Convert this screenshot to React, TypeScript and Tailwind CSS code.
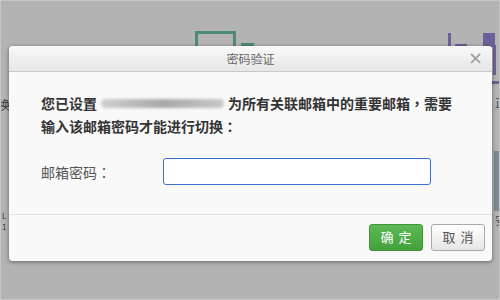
import React from "react";

const P = ({ c }: { c: string }) => (
  <span style={{ fontFamily: '"Noto Sans CJK TC", "Noto Sans CJK SC", sans-serif' }}>{c}</span>
);

export default function App() {
  const font = { fontFamily: '"Noto Sans CJK SC", "Noto Sans", sans-serif' };
  return (
    <div
      className="relative w-[500px] h-[300px] overflow-hidden bg-[#b3b3b3] border border-[#c6c6c6]"
      style={font}
    >
      {/* background canvas (dimmed by overlay) */}
      <div className="absolute left-[194px] top-[30px] w-[41px] h-[16px] border-[3px] border-b-0 border-[#4d8a79]" />
      <div className="absolute left-[240px] top-[42px] w-[13px] h-[4px] bg-[#4d8a79]" />
      <div className="absolute left-[447px] top-[32px] w-[3px] h-[14px] bg-[#6f5f98]" />
      <div className="absolute left-[454px] top-[43px] w-[12px] h-[3px] bg-[#6f5f98]" />
      <div className="absolute left-[482px] top-[32px] w-[12px] h-[14px] bg-[#6f5f98]" />
      <div className="absolute left-[492px] top-[44px] w-[3px] h-[30px] bg-[#6f5f98]" />
      <div className="absolute left-[491px] top-[80px] w-[9px] h-[3px] bg-[#6f5f98]" />
      <div className="absolute left-[493px] top-[150px] w-[7px] h-[60px] bg-[#7a8a92]" />
      <div className="absolute left-[-3px] top-[96px] text-[12px] leading-[16px] text-[#333]">换</div>
      <div className="absolute left-[494px] top-[94px] text-[11px] leading-[14px] text-[#444]">正</div>
      <div className="absolute left-[494px] top-[212px] text-[11px] leading-[14px] text-[#444]">安</div>
      <div className="absolute left-[1px] top-[209px] text-[8px] leading-[11px] text-[#333]">L<br />1</div>

      {/* dialog */}
      <div className="absolute left-[8px] top-[45px] w-[483px] h-[215px] rounded-[4px] bg-[#f9f9f9] shadow-[0_1px_4px_rgba(0,0,0,0.45)] flex flex-col overflow-hidden">
        <div className="relative h-[26px] flex items-center justify-center bg-gradient-to-b from-[#f9f9f9] to-[#e6e6e6] border-b border-[#c9c9c9]">
          <span className="text-[12px] leading-[16px] text-[#666]">密码验证</span>
          <span className="absolute right-[9px] top-[3px] text-[18px] leading-[18px] text-[#999]" style={{ fontFamily: '"DejaVu Sans", sans-serif' }}>×</span>
        </div>
        <div className="flex-1 pl-[32px] pr-[20px] pt-[20px]">
          <div className="text-[14px] leading-[23px] font-bold text-[#333]">
            <div className="flex items-center">
              <span>您已设置</span>
              <span className="inline-block w-[123px] h-[9px] mx-[4px] rounded-full bg-gradient-to-r from-[#cfcfcf] via-[#a8a8a8] to-[#c8c8c8] blur-[1.5px]" />
              <span>为所有关联邮箱中的重要邮箱<P c="，" />需要</span>
            </div>
            <div>输入该邮箱密码才能进行切换<P c="：" /></div>
          </div>
          <div className="flex items-center mt-[20px]">
            <span className="w-[122px] text-[14px] leading-[20px] text-[#555]">邮箱密码<P c="：" /></span>
            <div className="w-[268px] h-[27px] rounded-[3px] border border-[#3a6fd4] bg-white" />
          </div>
        </div>
        <div className="h-[47px] border-t border-[#e2e2e2] flex items-center justify-end gap-[8px] pr-[7px] pb-[2px]">
          <button className="w-[54px] h-[27px] rounded-[3px] border border-[#3f943a] bg-gradient-to-b from-[#5cb955] to-[#43a13b] text-white text-[13px] tracking-[5px] pl-[5px]">
            确定
          </button>
          <button className="w-[54px] h-[27px] rounded-[3px] border border-[#a8a8a8] bg-gradient-to-b from-[#ffffff] to-[#e6e6e6] text-[#555] text-[13px] tracking-[5px] pl-[5px]">
            取消
          </button>
        </div>
      </div>
    </div>
  );
}
